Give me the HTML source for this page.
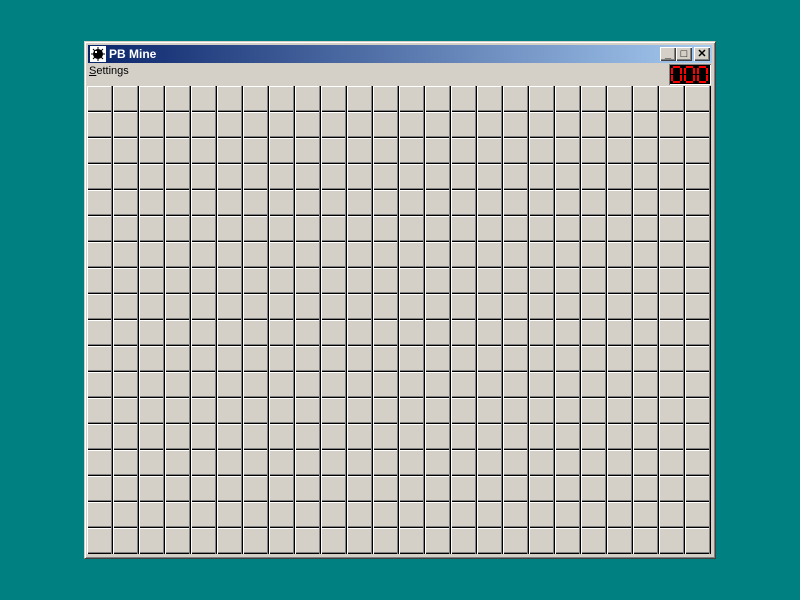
<!DOCTYPE html>
<html><head><style>
body{margin:0;width:800px;height:600px;background:#008080;position:relative;overflow:hidden;font-family:Tahoma,"Liberation Sans",sans-serif}
.win{position:absolute;left:84px;top:41px;width:632px;height:518px;background:#d4d0c8;box-sizing:border-box;border:1px solid;border-color:#d4d0c8 #404040 #404040 #d4d0c8;box-shadow:inset 1px 1px #fff,inset -1px -1px #808080}
.title{position:absolute;left:88px;top:45px;width:624px;height:18px;background:linear-gradient(90deg,#0a246a,#a6caf0)}
.title span{position:absolute;left:21px;top:2px;color:#fff;font-weight:bold;font-size:12px;font-family:"Liberation Sans",sans-serif}
.btn{position:absolute;top:47px;width:16px;height:14px;background:#d4d0c8;box-sizing:border-box;box-shadow:inset 1px 1px #fff,inset -1px -1px #404040,inset -2px -2px #808080;font:bold 11px "Liberation Sans",sans-serif;text-align:center;line-height:14px}
.menu{position:absolute;left:89px;top:65px;font-size:11px;font-family:"Liberation Sans",sans-serif}
.ctr{position:absolute;left:669px;top:64px;width:42px;height:21px;background:#000;box-shadow:inset 1px 1px #808080,inset -1px -1px #fff}
.grid{position:absolute;left:87px;top:86px;width:624px;height:468px;
background-image:
linear-gradient(90deg,#fff 1px,transparent 1px,transparent 24px,#808080 24px,#808080 25px,#000 25px),
linear-gradient(180deg,#fff 1px,transparent 1px,transparent 24px,#808080 24px,#808080 25px,#000 25px);
background-size:26px 26px;background-color:#d4d0c8}
</style></head><body>
<div class="win"></div>
<div class="title"><svg style="position:absolute;left:2px;top:1px" width="16" height="16"><rect width="16" height="16" fill="#fff"/><circle cx="8" cy="8" r="5" fill="#000"/><path d="M8 1v14M1 8h14M3 3l10 10M13 3L3 13" stroke="#000" stroke-width="1"/><rect x="5" y="5" width="2" height="2" fill="#fff"/></svg><span>PB Mine</span></div>
<div class="btn" style="left:660px">_</div>
<div class="btn" style="left:676px">□</div>
<div class="btn" style="left:694px">✕</div>
<div class="menu"><u>S</u>ettings</div>
<div class="ctr"><svg width="42" height="21" fill="none" stroke="#f00" stroke-width="2">
<path d="M4 3h7M3 4v6M12 4v6M3 11v6M12 11v6M4 18h7"/>
<path d="M17 3h7M16 4v6M25 4v6M16 11v6M25 11v6M17 18h7"/>
<path d="M30 3h7M29 4v6M38 4v6M29 11v6M38 11v6M30 18h7"/>
</svg></div>
<div class="grid"></div>
</body></html>
